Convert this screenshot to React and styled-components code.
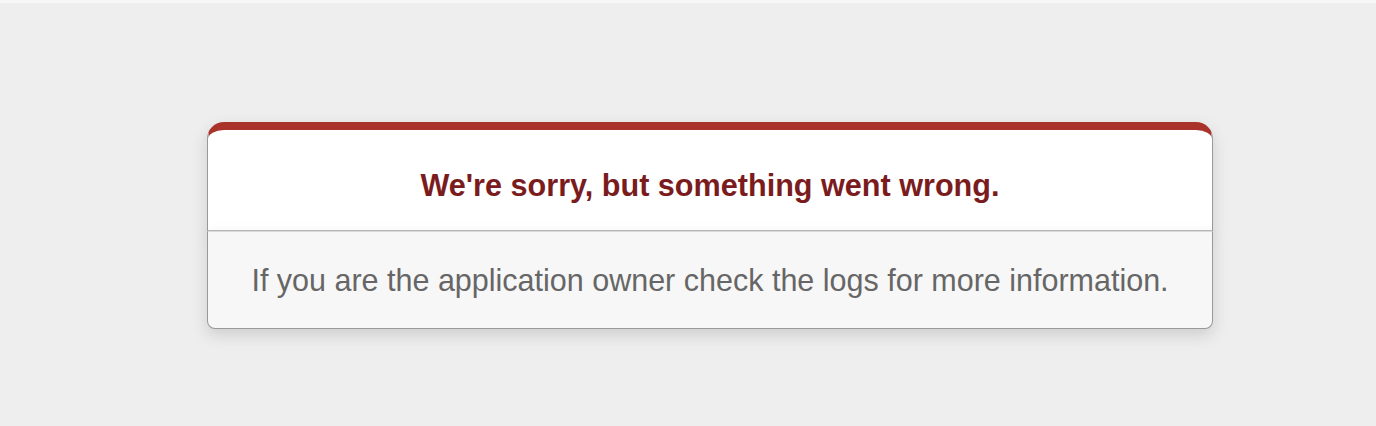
import React from "react";
import styled, { createGlobalStyle } from "styled-components";

const Global = createGlobalStyle`
  html, body { margin: 0; padding: 0; }
  body {
    background-color: #EEEEEE;
    border-top: 3px solid #F7F7F7;
    color: #2E2F30;
    text-align: center;
    font-family: "Liberation Sans", Arial, sans-serif;
    min-height: 423px;
  }
`;

const Dialog = styled.div`
  width: 1006px;
  margin: 119px 0 0 207px;
`;

const Panel = styled.div`
  border: 1px solid #CCC;
  border-right-color: #999;
  border-left-color: #999;
  border-bottom-color: #BBB;
  border-top: 8px solid #A9322B;
  border-top-left-radius: 17px;
  border-top-right-radius: 17px;
  background-color: #fff;
  padding: 13px 10% 0;
  box-shadow: 0 6px 15px rgba(50, 50, 50, 0.17);
`;

const Title = styled.h1`
  font-size: 30.6px;
  font-weight: bold;
  color: #7A1C1E;
  line-height: 45px;
  margin: 20px 0 22px;
`;

const Message = styled.p`
  margin: 0 0 30px;
  padding: 30px;
  font-size: 30.5px;
  line-height: 36px;
  background-color: #F7F7F7;
  border: 1px solid #CCC;
  border-right-color: #999;
  border-left-color: #999;
  border-bottom-color: #999;
  border-top-color: #DADADA;
  border-bottom-left-radius: 8px;
  border-bottom-right-radius: 8px;
  color: #666;
  box-shadow: 0 6px 15px rgba(50, 50, 50, 0.17);
`;

export default function App() {
  return (
    <>
      <Global />
      <Dialog>
        <Panel>
          <Title>We're sorry, but something went wrong.</Title>
        </Panel>
        <Message>If you are the application owner check the logs for more information.</Message>
      </Dialog>
    </>
  );
}
